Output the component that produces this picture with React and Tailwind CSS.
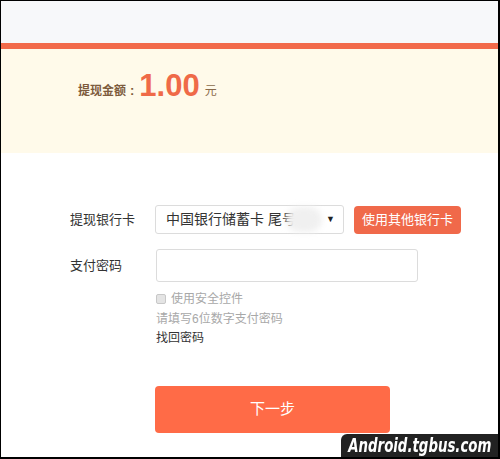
import React from 'react';

const font = { fontFamily: '"Liberation Sans", "Noto Sans CJK SC", sans-serif' };

const WithdrawForm = () => {
  return (
    <div className="w-[500px] h-[459px] relative overflow-hidden border-black border-t border-l border-r-2 border-b-2 bg-white" style={font}>
      {/* header strip */}
      <div className="h-[42px] bg-[#f7f8fa]" />
      <div className="h-[6px] bg-[#f26a4a]" />

      {/* amount */}
      <div className="h-[104px] bg-[#fffaea] flex items-end pb-[52px] pl-[77px]">
        <span className="text-[12px] font-bold text-[#7d5a3c] mb-[1px]">提现金额</span>
        <span className="text-[13px] font-bold text-[#7d5a3c] mb-[1px] ml-[4px] mr-[5px]">:</span>
        <span className="text-[31px] leading-[30px] font-bold text-[#ef6a48]">1.00</span>
        <span className="text-[12px] text-[#8a6a4a] ml-[5px] mb-[1px]">元</span>
      </div>

      {/* form */}
      <div className="pl-[69px] pt-[52px]">
        <div className="flex items-center">
          <div className="w-[85px] text-[13px] text-[#333]">提现银行卡</div>
          <div className="w-[189px] h-[29px] border border-[#dcdcdc] rounded-[3px] flex items-center pl-[10px] pr-[8px] relative">
            <span className="text-[14px] text-[#333]">中国银行储蓄卡 尾号</span>
            <div className="absolute left-[130px] top-[1px] w-[36px] h-[25px] rounded-full bg-[#f0f0f0] blur-[3px]" />
            <span className="ml-auto text-[9px] text-[#222]">▼</span>
          </div>
          <button className="ml-[10px] w-[107px] h-[28px] bg-[#f0694a] rounded-[4px] text-white text-[13px]">
            使用其他银行卡
          </button>
        </div>

        <div className="flex items-center mt-[15px]">
          <div className="w-[86px] text-[13px] text-[#333]">支付密码</div>
          <div className="w-[262px] h-[33px] border border-[#dcdcdc] rounded-[3px]" />
        </div>

        <div className="pl-[86px] mt-[10px] text-[12px]">
          <div className="flex items-center h-[14px]">
            <span className="w-[10px] h-[10px] border border-[#c8c8c8] bg-[#e4e4e4] rounded-[2px]" />
            <span className="ml-[5px] text-[#a8a8a8]">使用安全控件</span>
          </div>
          <div className="mt-[6px] text-[#a8a8a8] leading-[14px]">请填写6位数字支付密码</div>
          <div className="mt-[5px] text-[#333] leading-[14px]">找回密码</div>
        </div>

        <button className="ml-[85px] mt-[41px] w-[235px] h-[47px] bg-[#ff6b47] rounded-[4px] text-white text-[15px]">
          下一步
        </button>
      </div>

      {/* watermark */}
      <div className="absolute right-0 bottom-0 w-[157px] h-[23px] bg-[#222] rounded-tl-[6px] flex items-center justify-center overflow-hidden">
        <span className="text-white text-[19px] font-bold italic whitespace-nowrap scale-x-[0.78]" style={{ fontFamily: '"DejaVu Sans Condensed", "Liberation Sans", sans-serif' }}>
          Android.tgbus.com
        </span>
      </div>
    </div>
  );
};

export default function App() {
  return <WithdrawForm />;
}
